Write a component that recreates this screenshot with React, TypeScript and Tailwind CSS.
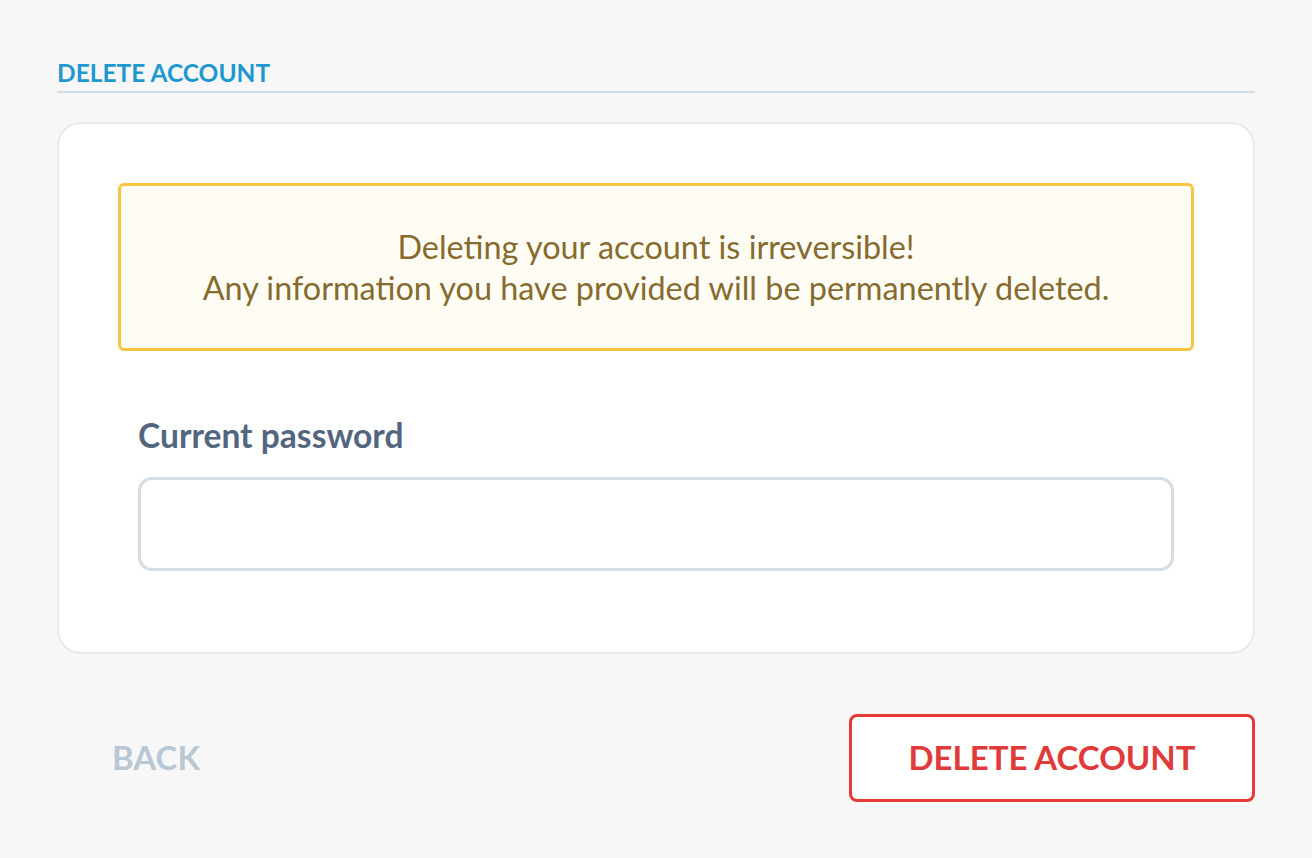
import React from "react";

export default function App() {
  return (
    <div
      className="min-h-[858px] w-full bg-[#f7f7f7] px-[57px] pt-[58px]"
      style={{ fontFamily: "Lato, 'Noto Sans', sans-serif" }}
    >
      <div className="border-b-2 border-[#d3dde6] pb-[3px]">
        <h2 className="text-[24.5px] font-bold leading-[30px] text-[#1f97cf]">DELETE ACCOUNT</h2>
      </div>

      <div className="mt-[29px] rounded-[24px] border-2 border-[#e6eaef] bg-white px-[59px] pt-[59px] pb-[81px]">
        <div className="rounded-[6px] border-[3px] border-[#f8c540] bg-[#fffcf4] py-[40px] text-center text-[32.4px] leading-[41px] text-[#866b2e]">
          <p>Deleting your account is irreversible!</p>
          <p>Any information you have provided will be permanently deleted.</p>
        </div>

        <div className="px-[20px] pt-[64px]">
          <label className="block text-[33.6px] font-bold leading-[40px] text-[#52677f]">Current password</label>
          <input
            type="password"
            className="mt-[22px] block h-[94px] w-full rounded-[14px] border-[3px] border-[#d4dce4] bg-white outline-none"
          />
        </div>
      </div>

      <div className="mt-[60px] flex items-center justify-between">
        <button className="px-[55px] text-[33px] font-bold text-[#b9c7d5]">BACK</button>
        <button className="h-[88px] w-[406px] rounded-[8px] border-[3px] border-[#e53935] bg-white text-[33px] font-bold text-[#e03a3a]">
          DELETE ACCOUNT
        </button>
      </div>
    </div>
  );
}
